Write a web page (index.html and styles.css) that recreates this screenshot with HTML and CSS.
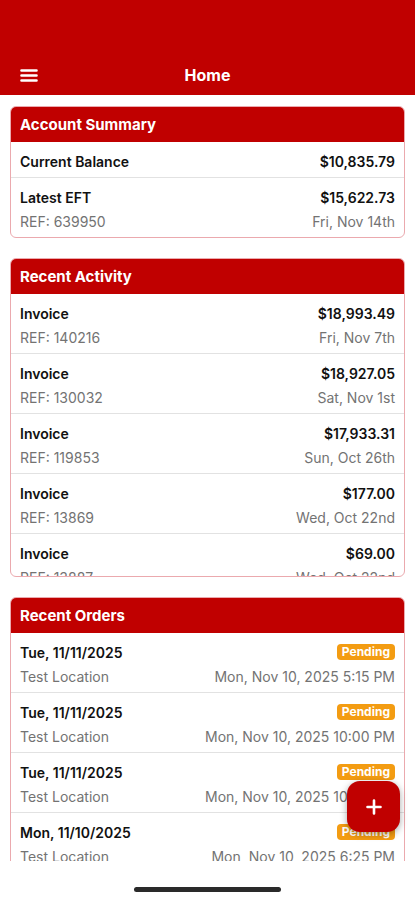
FILE: index.html
```html
<!DOCTYPE html>
<html lang="en">
<head>
  <meta charset="UTF-8">
  <meta name="viewport" content="width=device-width, initial-scale=1.0">
  <title>Home</title>
  <link rel="stylesheet" href="styles.css">
</head>
<body>
  <div class="app">
    <header class="topbar">
      <div class="topbar-left">
        <svg class="menu-icon" width="18" height="13" viewBox="0 0 18 13">
          <path d="M1.5 1.5h15M1.5 6.5h15M1.5 11.5h15" stroke="#fff" stroke-width="2.6" stroke-linecap="round"/>
        </svg>
      </div>
      <div class="topbar-title">Home</div>
      <div></div>
    </header>

    <main class="content">
      <section class="card">
        <div class="card-header">Account Summary</div>
        <div class="row">
          <div class="line"><span class="strong">Current Balance</span><span class="strong">$10,835.79</span></div>
        </div>
        <div class="row last">
          <div class="line"><span class="strong">Latest EFT</span><span class="strong">$15,622.73</span></div>
          <div class="line sub"><span>REF: 639950</span><span>Fri, Nov 14th</span></div>
        </div>
      </section>

      <section class="card">
        <div class="card-header">Recent Activity</div>
        <div class="list activity">
          <div class="row">
            <div class="line"><span class="strong">Invoice</span><span class="strong">$18,993.49</span></div>
            <div class="line sub"><span>REF: 140216</span><span>Fri, Nov 7th</span></div>
          </div>
          <div class="row">
            <div class="line"><span class="strong">Invoice</span><span class="strong">$18,927.05</span></div>
            <div class="line sub"><span>REF: 130032</span><span>Sat, Nov 1st</span></div>
          </div>
          <div class="row">
            <div class="line"><span class="strong">Invoice</span><span class="strong">$17,933.31</span></div>
            <div class="line sub"><span>REF: 119853</span><span>Sun, Oct 26th</span></div>
          </div>
          <div class="row">
            <div class="line"><span class="strong">Invoice</span><span class="strong">$177.00</span></div>
            <div class="line sub"><span>REF: 13869</span><span>Wed, Oct 22nd</span></div>
          </div>
          <div class="row">
            <div class="line"><span class="strong">Invoice</span><span class="strong">$69.00</span></div>
            <div class="line sub"><span>REF: 13887</span><span>Wed, Oct 22nd</span></div>
          </div>
        </div>
      </section>

      <section class="card">
        <div class="card-header">Recent Orders</div>
        <div class="list">
          <div class="row">
            <div class="line"><span class="strong">Tue, 11/11/2025</span><span class="badge">Pending</span></div>
            <div class="line sub"><span>Test Location</span><span>Mon, Nov 10, 2025 5:15 PM</span></div>
          </div>
          <div class="row">
            <div class="line"><span class="strong">Tue, 11/11/2025</span><span class="badge">Pending</span></div>
            <div class="line sub"><span>Test Location</span><span>Mon, Nov 10, 2025 10:00 PM</span></div>
          </div>
          <div class="row">
            <div class="line"><span class="strong">Tue, 11/11/2025</span><span class="badge">Pending</span></div>
            <div class="line sub"><span>Test Location</span><span>Mon, Nov 10, 2025 10:00 PM</span></div>
          </div>
          <div class="row">
            <div class="line"><span class="strong">Mon, 11/10/2025</span><span class="badge">Pending</span></div>
            <div class="line sub"><span>Test Location</span><span>Mon, Nov 10, 2025 6:25 PM</span></div>
          </div>
        </div>
      </section>
    </main>

    <div class="home-area"><div class="home-indicator"></div></div>

    <button class="fab" type="button" aria-label="New order">
      <svg width="16" height="16" viewBox="0 0 16 16">
        <path d="M8 1.5v13M1.5 8h13" stroke="#fff" stroke-width="2.6" stroke-linecap="round"/>
      </svg>
    </button>
  </div>
</body>
</html>
```

FILE: styles.css
```css
* {
  box-sizing: border-box;
}
body {
  margin: 0;
  font-family: Inter, "Liberation Sans", Arial, sans-serif;
  background: #fff;
  color: #111;
}
.app {
  position: relative;
  width: 415px;
  height: 900px;
  display: flex;
  flex-direction: column;
  overflow: hidden;
}
.topbar {
  height: 95px;
  flex: none;
  background: #c00000;
  color: #fff;
  display: grid;
  grid-template-columns: 1fr auto 1fr;
  align-items: center;
  align-content: end;
  padding-bottom: 8px;
}
.topbar-left {
  padding-left: 20px;
  display: flex;
  align-items: center;
}
.topbar-title {
  font-size: 16px;
  font-weight: 700;
  line-height: 24px;
}
.content {
  flex: 1;
  overflow: hidden;
  padding: 11px 10px 0;
  display: flex;
  flex-direction: column;
  gap: 20px;
}
.card {
  flex: none;
  border: 1px solid #eba9ae;
  border-radius: 6px;
  overflow: hidden;
  background: #fff;
}
.card-header {
  height: 35px;
  background: #c00000;
  color: #fff;
  font-size: 15px;
  font-weight: 700;
  line-height: 35px;
  padding: 0 9px;
}
.list.activity {
  height: 282px;
  overflow: hidden;
}
.row {
  padding: 7px 9px 4px;
  border-bottom: 1px solid #e2e2e2;
}
.row.last {
  border-bottom: none;
}
.line {
  display: flex;
  justify-content: space-between;
  align-items: center;
  height: 24px;
  font-size: 14px;
}
.strong {
  font-weight: 600;
  color: #111;
}
.sub {
  color: #737373;
}
.badge {
  background: #f39c12;
  color: #fff;
  font-size: 12px;
  font-weight: 700;
  line-height: 16px;
  padding: 0 5px;
  border-radius: 4px;
}
.home-area {
  height: 39px;
  flex: none;
  display: flex;
  justify-content: center;
  align-items: flex-end;
  padding-bottom: 8px;
}
.home-indicator {
  width: 147px;
  height: 5px;
  border-radius: 3px;
  background: #2a2a2a;
}
.fab {
  position: absolute;
  right: 15px;
  bottom: 68px;
  width: 53px;
  height: 51px;
  border: none;
  border-radius: 13px;
  background: #c00000;
  box-shadow: 0 2px 7px rgba(0,0,0,0.35);
  display: flex;
  align-items: center;
  justify-content: center;
  padding: 0;
}
```
